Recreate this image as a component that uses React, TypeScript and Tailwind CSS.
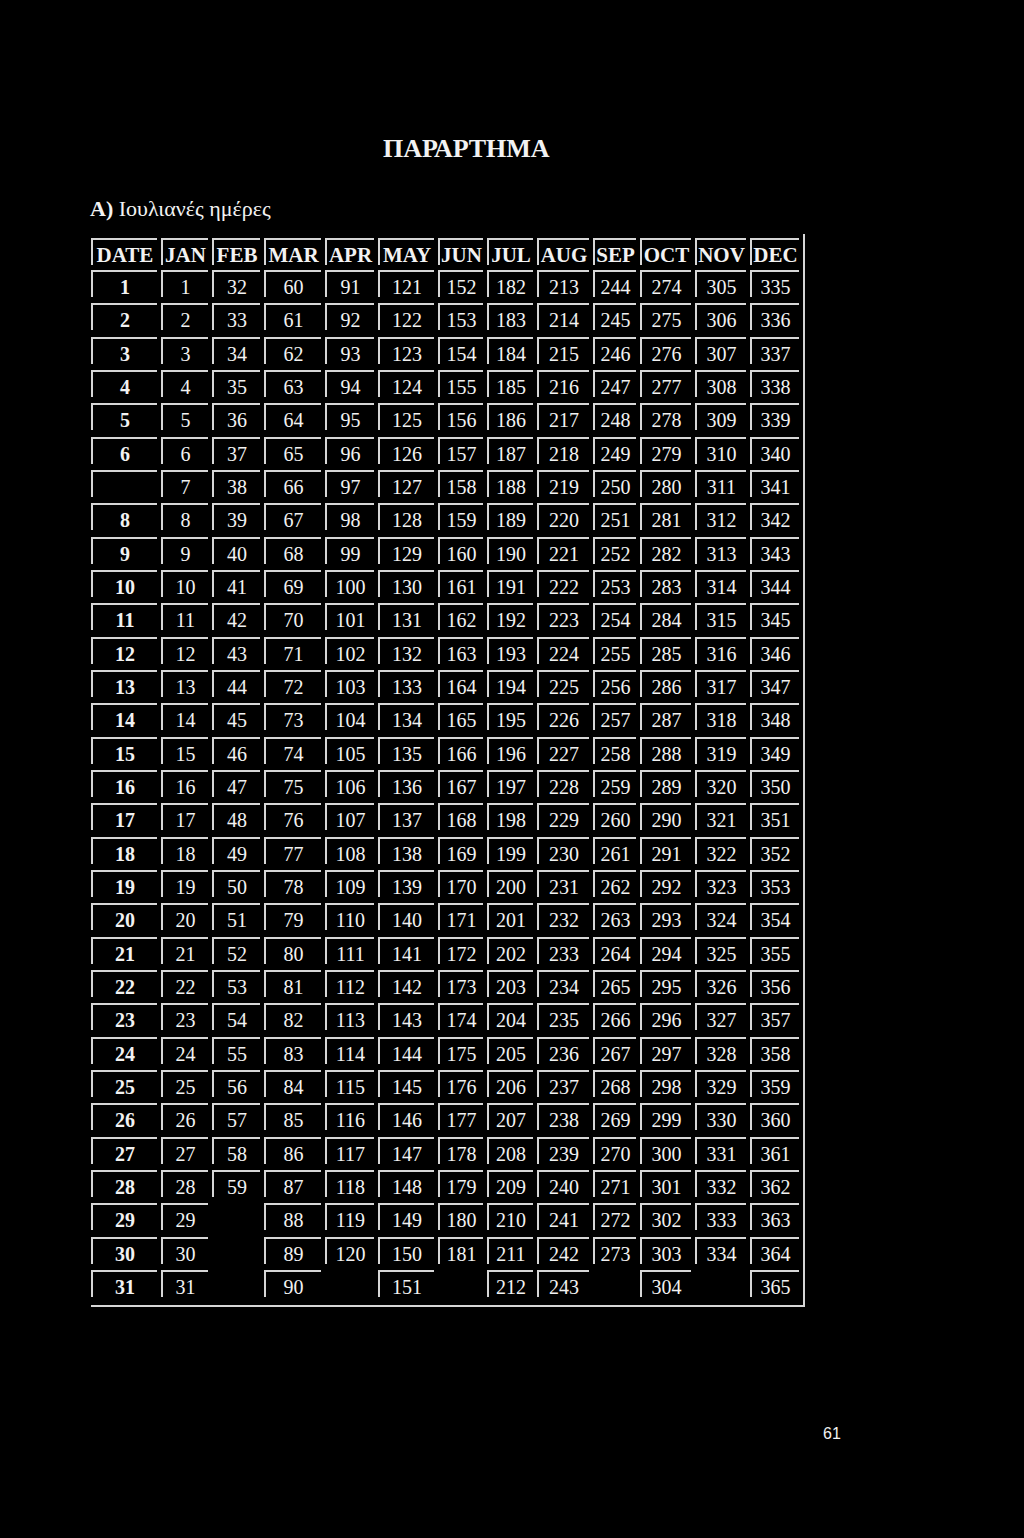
const months = ["JAN", "FEB", "MAR", "APR", "MAY", "JUN", "JUL", "AUG", "SEP", "OCT", "NOV", "DEC"];
const monthLengths = [31, 28, 31, 30, 31, 30, 31, 31, 30, 31, 30, 31];

// column widths measured off the scan, DATE first
const colWidths = [
  "w-[70px]",
  "w-[51px]",
  "w-[52px]",
  "w-[61px]",
  "w-[53px]",
  "w-[60px]",
  "w-[49px]",
  "w-[50px]",
  "w-[56px]",
  "w-[47px]",
  "w-[55px]",
  "w-[55px]",
  "w-[53px]",
];

const offsets = monthLengths.map((_, i) => monthLengths.slice(0, i).reduce((a, b) => a + b, 0));

function Cell({ width, children, bold, empty }: { width: string; children?: React.ReactNode; bold?: boolean; empty?: boolean }) {
  return (
    <div className={`${width} shrink-0 h-full`}>
      {!empty && (
        <div
          className={`mr-[4px] h-[27px] border-t-2 border-l-2 border-[#d6d6d6] flex items-center justify-center pt-[5px] ${
            bold ? "font-bold" : ""
          }`}
        >
          {children}
        </div>
      )}
    </div>
  );
}

export default function App() {
  const days = Array.from({ length: 31 }, (_, i) => i + 1);

  return (
    <div className="min-h-[1538px] w-[1024px] bg-black text-[#f2f2f2] font-['Liberation_Serif',serif]">
      <div className="pt-[133px] pl-[383px] text-[26px] leading-[32px] font-bold">ΠΑΡΑΡΤΗΜΑ</div>
      <div className="mt-[32px] pl-[90px] text-[22px] leading-[24px]">
        <span className="font-bold">Α)</span> Ιουλιανές ημέρες
      </div>

      <div className="mt-[13px] ml-[91px] w-[714px] border-r-2 border-b-2 border-[#d6d6d6] pt-[4px] pb-[2px]">
        {/* header row */}
        <div className="flex h-[32px] text-[21px] leading-none">
          <Cell width={colWidths[0]} bold>
            DATE
          </Cell>
          {months.map((m, i) => (
            <Cell key={m} width={colWidths[i + 1]} bold>
              {m}
            </Cell>
          ))}
        </div>

        {days.map((d) => (
          <div key={d} className="flex h-[33.33px] text-[20px] leading-none">
            <Cell width={colWidths[0]} bold>
              {d === 7 ? "" : d}
            </Cell>
            {monthLengths.map((len, i) => (
              <Cell key={i} width={colWidths[i + 1]} empty={d > len}>
                {offsets[i] + d}
              </Cell>
            ))}
          </div>
        ))}
      </div>

      <div className="mt-[117px] pl-[823px] text-[16px] leading-[20px] font-['Liberation_Sans',sans-serif]">61</div>
    </div>
  );
}
